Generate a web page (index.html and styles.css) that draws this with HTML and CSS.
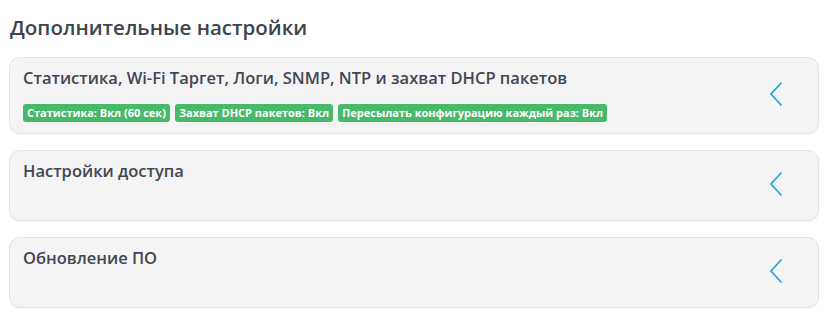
FILE: index.html
```html
<!DOCTYPE html>
<html lang="ru">
<head>
    <meta charset="UTF-8">
    <meta name="viewport" content="width=device-width, initial-scale=1.0">
    <title>Дополнительные настройки</title>
    <link rel="stylesheet" href="styles.css">
</head>
<body>
    <div class="container">
        <h2 class="page-title">Дополнительные настройки</h2>

        <!-- Statistics section -->
        <div class="card">
            <div class="card-body">
                <div class="card-title">Статистика, Wi-Fi Таргет, Логи, SNMP, NTP и захват DHCP пакетов</div>
                <div class="card-meta">
                    <span class="badge">Статистика: Вкл (60 сек)</span>
                    <span class="badge">Захват DHCP пакетов: Вкл</span>
                    <span class="badge">Пересылать конфигурацию каждый раз: Вкл</span>
                </div>
            </div>
            <svg class="chevron" width="14" height="26" viewBox="0 0 14 26"><path d="M12.5 1.5 L2 13 L12.5 24.5" fill="none" stroke="#2aa6de" stroke-width="1.8"/></svg>
        </div>

        <!-- Access section -->
        <div class="card">
            <div class="card-body">
                <div class="card-title">Настройки доступа</div>
                <div class="card-meta"></div>
            </div>
            <svg class="chevron" width="14" height="26" viewBox="0 0 14 26"><path d="M12.5 1.5 L2 13 L12.5 24.5" fill="none" stroke="#2aa6de" stroke-width="1.8"/></svg>
        </div>

        <!-- Firmware section -->
        <div class="card">
            <div class="card-body">
                <div class="card-title">Обновление ПО</div>
                <div class="card-meta"></div>
            </div>
            <svg class="chevron" width="14" height="26" viewBox="0 0 14 26"><path d="M12.5 1.5 L2 13 L12.5 24.5" fill="none" stroke="#2aa6de" stroke-width="1.8"/></svg>
        </div>
    </div>
</body>
</html>
```

FILE: styles.css
```css
/* General Styles */
body {
    font-family: 'Open Sans', 'Noto Sans', sans-serif;
    background-color: #fff;
    color: #3f4550;
    margin: 0;
    padding: 0;
}

.container {
    padding: 10px 9px;
}

.page-title {
    margin: 3px 0 16px 1px;
    font-size: 20.5px;
    line-height: 28px;
    font-weight: 600;
    color: #3d4350;
}

.card {
    display: flex;
    align-items: center;
    background: #f4f4f4;
    border: 1px solid #e4e4e4;
    border-radius: 11px;
    padding: 8px 35px 11px 13px;
    margin-bottom: 16px;
    box-shadow: 0 1px 2px rgba(0, 0, 0, 0.04);
}

.card-body {
    flex: 1;
}

.card-title {
    font-size: 16.5px;
    line-height: 24px;
    font-weight: 600;
    color: #414753;
}

.card-meta {
    display: flex;
    gap: 5px;
    margin-top: 14px;
    min-height: 12px;
}

.badge {
    background: #48b96a;
    color: #fff;
    font-size: 11px;
    font-weight: 700;
    line-height: 18px;
    padding: 0 4px;
    border-radius: 3px;
}

.chevron {
    flex-shrink: 0;
}
```
